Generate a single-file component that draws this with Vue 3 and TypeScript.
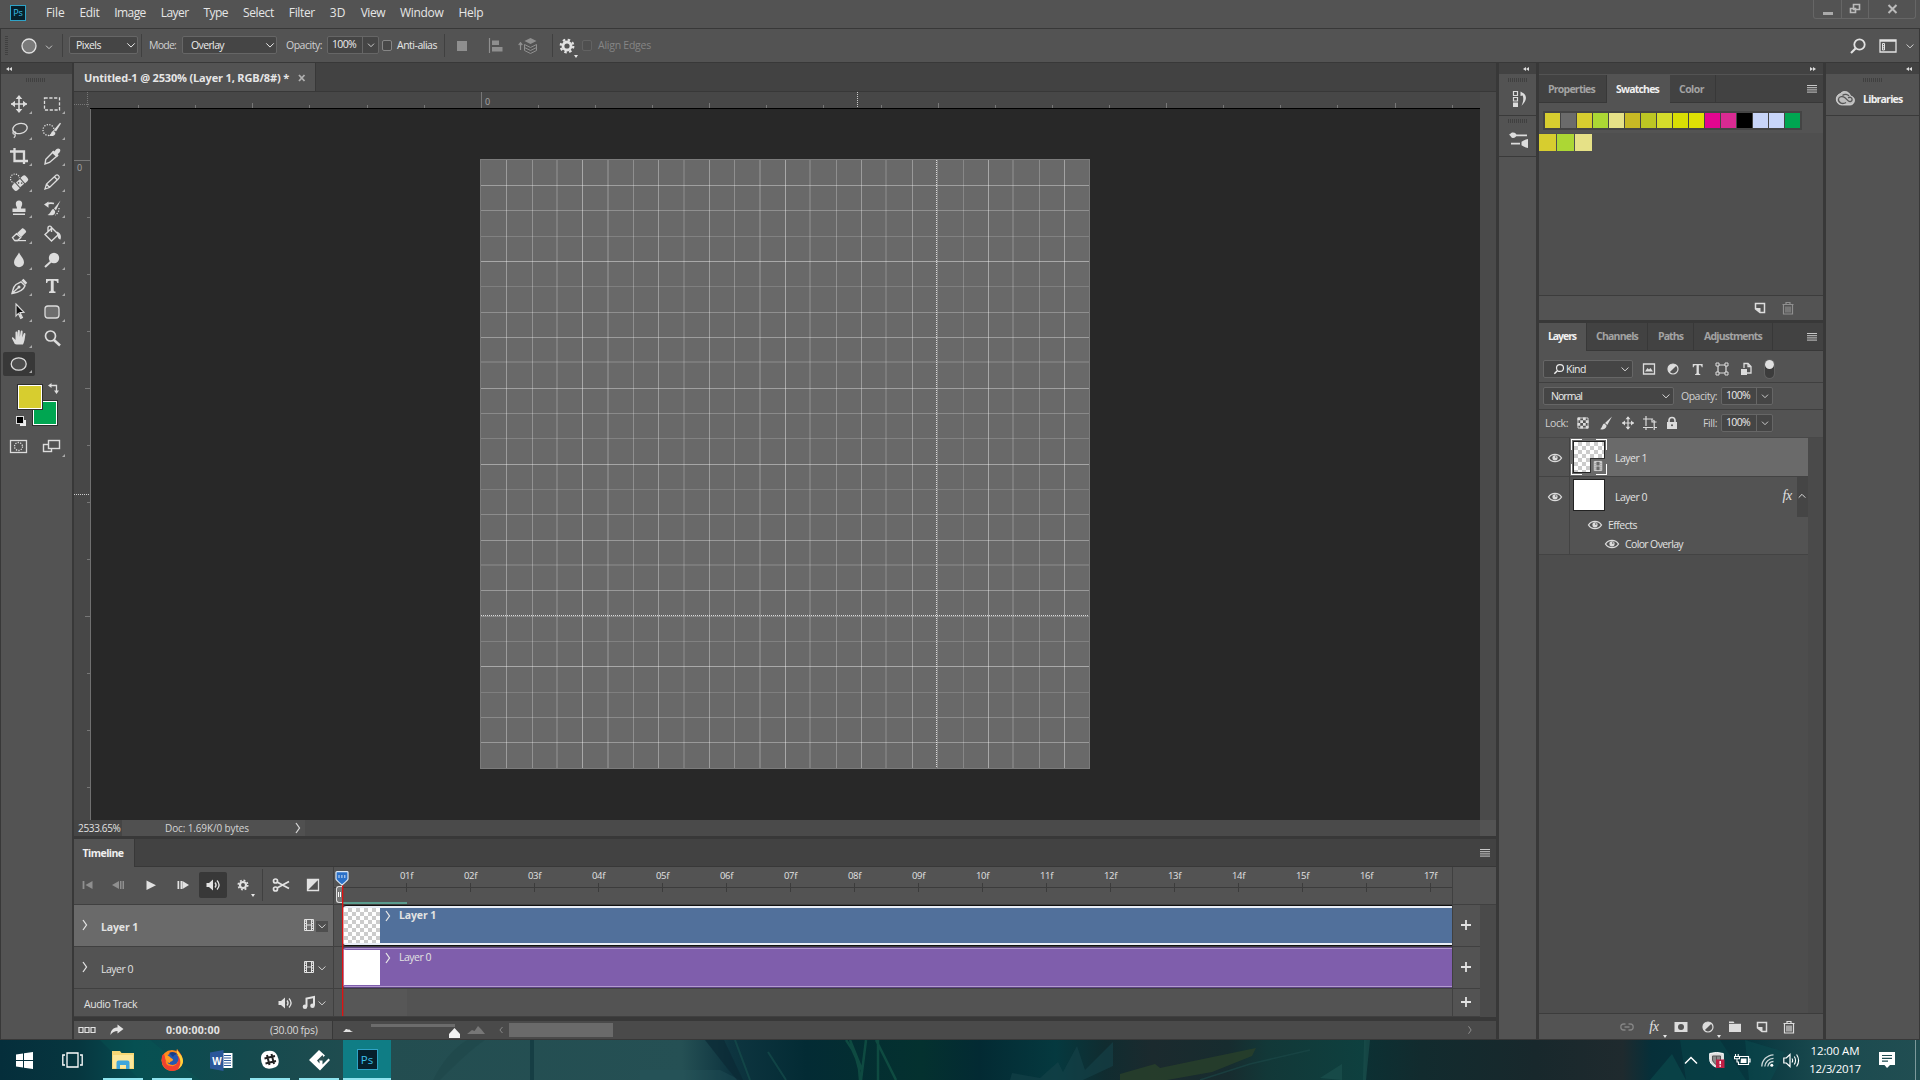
<script setup lang="ts">
import { h, type FunctionalComponent, type Directive } from 'vue'

/* Tightens or loosens tracking so a label occupies the given width in px. */
const vFit: Directive<HTMLElement, number> = {
  mounted(el, { value }) {
    const natural = el.getBoundingClientRect().width
    const n = (el.textContent ?? '').trim().length
    el.style.letterSpacing = `${(value - natural) / n}px`
    el.style.width = `${value}px`
  },
}

const S = 'fill="none" stroke="currentColor"'
const icons: Record<string, string> = {
  move: `<path d="M12 4v16M4 12h16" ${S} stroke-width="1.6"/><path d="M12 3l-3.3 4h6.6zM12 21l-3.3-4h6.6zM4 12l4-3.3v6.6zM20 12l-4-3.3v6.6z" fill="currentColor"/>`,
  marquee: `<rect x="4.5" y="6" width="15" height="12" ${S} stroke-width="1.3" stroke-dasharray="3.2 1.6"/>`,
  lasso: `<ellipse cx="13" cy="10.500" rx="7.300" ry="5" transform="rotate(-12 13 10.5)" ${S} stroke-width="1.4"/><path d="M7 13c-1.500 1-1.500 3.200.300 3.200s2-2 .200-2.600M8 16c.500 1.500 0 3-1.200 3.800" ${S} stroke-width="1.2"/>`,
  quick: `<circle cx="8.500" cy="12" r="5.500" ${S} stroke-width="1.3" stroke-dasharray="1.300 1.300"/><path d="M21 5.500l-1-.7-6 7 2 1.800zM13.500 13c-2.500-.2-2 3.500-4.700 4.700 3 1 6.800.3 6.600-3z" fill="currentColor"/>`,
  crop: `<path d="M3 7.500h14V20M7.500 4v13H21" ${S} stroke-width="2.300"/>`,
  eyedrop: `<path d="M13 8l4 4-7.500 6.500L5 20l.8-4.700z" ${S} stroke-width="1.400"/><path d="M11.500 8.500l2-2 1 1C16 5 18 3.500 19.700 5c1.500 1.500 0 3.700-2 5.200l1 1-2 2z" fill="currentColor"/>`,
  heal: `<circle cx="8" cy="8.500" r="4.500" ${S} stroke-width="1.2" stroke-dasharray="1.200 1.200"/><g transform="rotate(-42 13 13)"><rect x="4" y="9.500" width="18" height="7.200" rx="2.400" fill="currentColor"/><rect x="9.300" y="9" width="7.300" height="8.200" fill="#535353"/><rect x="10.300" y="10" width="5.300" height="6.200" fill="currentColor"/><circle cx="12" cy="12" r=".8" fill="#535353"/><circle cx="14.200" cy="14.200" r=".8" fill="#535353"/></g>`,
  pencil: `<path d="M5 19l1.500-5L16 5.200c1.500-1.200 4.200 1.300 2.900 3L9.500 17.500zM6.500 14l3 3.500M14.500 7l3 3" ${S} stroke-width="1.300"/>`,
  stamp: `<path d="M12 4.500a3.300 3.300 0 0 1 3.200 3.400c0 2-1.400 2.800-1.200 4.600h4.500v3.500h-13v-3.500H10c.2-1.800-1.200-2.600-1.200-4.600A3.300 3.300 0 0 1 12 4.500zM6 17.500h12V19H6z" fill="currentColor"/>`,
  history: `<path d="M20.500 4.500l-6.500 8 2 1.700zM13.500 13c-2.500-.2-2 4-6 6 4 .8 8 .3 7.600-3.800zM4 8.500l4.500-3v6.300z" fill="currentColor"/><path d="M7 8c2-1 5-1 7-.5" ${S} stroke-width="1.800"/><path d="M19 12a7 7 0 0 1-4 7" ${S} stroke-width="1.300" stroke-dasharray="1.300 1.300"/>`,
  eraser: `<path d="M5.500 15.500l4-3.800 4.300 3.800-3.300 3H7.600z" ${S} stroke-width="1.300"/><path d="M10 11.200l5-4.700c1-.9 4.800 2.400 4 3.700l-4.700 4.900z" fill="currentColor"/><path d="M8 18.600h11" ${S} stroke-width="1.200"/>`,
  bucket: `<path d="M5 12.500l7-6.500 6.500 6.500-7 6.500zM8 9.500V6c0-2.500 3.500-2.500 3.500 0v4" ${S} stroke-width="1.400"/><path d="M17 9.500c4 1.500 4.500 5 3.500 8-3-.5-2.800-4-3.500-5z" fill="currentColor"/>`,
  drop: `<path d="M12 4.500c1.500 3.500 5 6.300 5 9.700a5 5 0 0 1-10 0c0-3.400 3.500-6.200 5-9.700z" fill="currentColor"/>`,
  dodge: `<circle cx="14" cy="10" r="5.200" fill="currentColor"/><path d="M11 13.500L5 19" ${S} stroke-width="2"/>`,
  pen: `<path d="M5 19.500c1.200-3.500.8-6.500 4-9l5-2.700 4 4c-1.500 4.500-5 6.500-13 7.700zM5.500 19l6-5.500" ${S} stroke-width="1.400"/><circle cx="12" cy="13" r="1.500" fill="currentColor"/><path d="M14.500 6.500l2-1.700 3.700 3.900-1.700 2.100z" fill="currentColor"/>`,
  type: `<path d="M6 5h12.500v4h-1.200c-.3-1.500-.8-2.300-2.500-2.300h-1.100V16c0 1.200.6 1.500 1.800 1.600v1.300H9v-1.300c1.200-.1 1.800-.4 1.800-1.600V6.700H9.700C8 6.700 7.500 7.500 7.200 9H6z" fill="currentColor"/>`,
  arrow: `<path d="M9 4l8 8.300-4 .3 2.500 5-1.800.9-2.400-5L9 16z" fill="#111" stroke="currentColor" stroke-width="1.100"/><path d="M12.600 13.500l2 4.600" ${S} stroke-width="1.800"/>`,
  rrect: `<rect x="5" y="6" width="14" height="12" rx="3" fill="#6e6e6e" stroke="currentColor" stroke-width="1.300"/>`,
  hand: `<path d="M6.800 18L4 12.500c-.4-1.300 1-1.500 1.700-.6L7.500 14V6.500c0-1.300 1.800-1.300 1.900 0V11l.4-6c.1-1.400 2-1.400 2 0v6l.9-5.700c.2-1.300 2-1 1.900.3l-.3 6 1.300-3.800c.5-1.200 2-.7 1.800.5-.5 3-.8 8-2.500 10.200H8.700z" transform="translate(1 0)" fill="currentColor"/>`,
  zoom: `<circle cx="10.500" cy="10" r="5" ${S} stroke-width="1.700"/><path d="M14 14l6 5.500" ${S} stroke-width="2.500"/>`,
  ellipse: `<ellipse cx="11.700" cy="12" rx="7.500" ry="6.200" fill="#6e6e6e" fill-opacity=".4" stroke="currentColor" stroke-width="1.300"/>`,
  mask: `<rect x="3.500" y="5.500" width="16" height="12" ${S} stroke-width="1.300"/><circle cx="11.500" cy="11.500" r="4" ${S} stroke-width="1.300" stroke-dasharray="1.300 1.200"/>`,
  screen: `<rect x="3.500" y="9.500" width="8" height="7" ${S} stroke-width="1.400"/><rect x="8.500" y="5.500" width="11" height="8" fill="#535353" stroke="currentColor" stroke-width="1.400"/>`,
  chev: `<path d="M7.500 10l4.500 4.500 4.500-4.500" ${S} stroke-width="1.200"/>`,
  chevUp: `<path d="M8 14l4-4 4 4" ${S} stroke-width="1.200"/>`,
  chevR: `<path d="M10 7l3.500 5-3.500 5" ${S} stroke-width="1.300"/>`,
  chevL: `<path d="M14 8l-3.500 4 3.500 4" ${S} stroke-width="1.200"/>`,
  circ: `<circle cx="12" cy="12" r="7" fill="#7a7a7a" stroke="currentColor" stroke-width="1.300"/>`,
  square: `<rect x="7" y="7" width="10" height="10" fill="currentColor"/>`,
  align: `<path d="M5.500 4v15" ${S} stroke-width="1.200"/><path d="M8 6.500h7v4.500H8zM8 13h10.500v4.500H8z" fill="currentColor"/>`,
  stack: `<path d="M14.500 4l6 3-6 3-6-3z" fill="currentColor"/><path d="M8.500 10.500l6 3 6-3M8.500 13.500l6 3 6-3M8.500 16.500l6 3 6-3M8.500 10.500v6M20.500 10.500v6" ${S} stroke-width="1"/><path d="M4.500 16V9M2.700 11l1.800-2.200L6.300 11" ${S} stroke-width="1.200"/>`,
  gear: `<circle cx="12" cy="12" r="4" ${S} stroke-width="2.800"/><circle cx="12" cy="12" r="6.300" ${S} stroke-width="2.200" stroke-dasharray="2.470 2.470"/>`,
  search: `<circle cx="13.500" cy="10.500" r="5.200" ${S} stroke-width="1.800"/><path d="M9.500 14.500L5 19" ${S} stroke-width="2.200"/>`,
  workspace: `<path d="M4 6h16v12H4zM4 7h16" ${S} stroke-width="1.300"/><path d="M6.500 9.500h2v6.500h-2zM6.500 11.700h2M6.500 13.800h2" ${S} stroke-width="1"/>`,
  lines: `<path d="M7 8.500h10M7 10.700h10M7 12.900h10M7 15.100h10" ${S} stroke-width="1"/>`,
  histPanel: `<path d="M4.500 4.500h4v4h-4zM4.500 10.500h4v3.500h-4z" ${S} stroke-width="1.200"/><path d="M4 15.500h5v4.500H4zM11.500 9V4.500l2 1.300c4 1.500 5.500 7-1 13 2-4.500 2.200-8 1.200-10.200z" fill="currentColor"/>`,
  brushes: `<path d="M8 7.500h12v1.800H8zM4 15.700h9v1.800H4zM2 7.500C4 7 3.500 5.500 6 5.500s3.500 1.500 3.500 2.800S8 11 6 11 4 9 2 7.500zM21 12v9c-2.500-.5-4.500-1.500-6.500-2.700v-3.600C16.500 13.500 18.500 12.500 21 12z" fill="currentColor"/>`,
  cc: `<path d="M7.500 6.500c-6.500 2-5 11.500 1.500 11.500h8c5 0 6.500-8 .5-9C16 3.500 9.500 3.500 7.500 6.500z" fill="#bdbdbd" stroke="#ddd" stroke-width=".8"/><path d="M13 15.500C9 18 5 15 5.500 12S10 9 12 10.700l3.500 3.400c1.500 1.200 3.800.3 3.600-1.800-.2-2-2.500-2.600-4-1.400M9.500 8.500c2-2 5.500-1.300 6.500.5" ${S} stroke-width="1.300" style="color:#555"/>`,
  page: `<path d="M7.500 7.500h9v9H12L7.500 13z" ${S} stroke-width="1.500"/><path d="M7 12h5.500v5z" fill="currentColor"/>`,
  trash: `<path d="M7.500 9v9h9V9M6.500 8.500h11M10 8V6.500h4V8M10 10.500v6M12 10.500v6M14 10.500v6" ${S} stroke-width="1.200"/>`,
  image: `<path d="M6.500 7h11v10h-11z" ${S} stroke-width="1.300"/><path d="M8 14.500l2.500-3.500 1.500 1.500 1.500-1.500 2.500 3.500z" fill="currentColor"/>`,
  adjust: `<circle cx="12" cy="12" r="5" ${S} stroke-width="1.200"/><path d="M15.600 8.400A5 5 0 0 1 8.400 15.600z" transform="rotate(180 12 12)" fill="currentColor"/>`,
  shape: `<path d="M8 8h8v8H8z" ${S} stroke-width="1.200"/><path d="M6 6h3v3H6zM15 6h3v3h-3zM6 15h3v3H6zM15 15h3v3h-3z" fill="#535353" stroke="currentColor" stroke-width="1"/>`,
  smart: `<path d="M10 11V6.500h4l3 3V16h-4M14 6.500v3h3" ${S} stroke-width="1.300"/><path d="M7 12h6v6H7z" fill="currentColor"/>`,
  checker: `<path d="M6.500 6.500h11v11h-11z" ${S} stroke-width="1"/><path d="M6 6h3v3H6zM12 6h3v3h-3zM9 9h3v3H9zM15 9h3v3h-3zM6 12h3v3H6zM12 12h3v3h-3zM9 15h3v3H9zM15 15h3v3h-3z" fill="currentColor"/>`,
  brush: `<path d="M18 5.500l-7 6.500 2.300 2zM10.500 12.500c-2.500.5-1.500 3.500-4.500 5.800 3 .5 6.500-.3 6.500-3.800z" fill="currentColor"/>`,
  artboard: `<path d="M8 5v14M5 8h9.500l1.700 2v9M5 16.500h14M14 8v3h4.500" ${S} stroke-width="1.200" stroke-dasharray="10 1"/>`,
  lock: `<path d="M7 11h10v7H7z" fill="currentColor"/><path d="M9 11.500V9.500c0-4 6-4 6 0v2" ${S} stroke-width="1.600"/><circle cx="12" cy="14.300" r="1" fill="#535353"/>`,
  eye: `<path d="M5.500 12c3-4.800 10-4.800 13 0-3 4.800-10 4.800-13 0z" ${S} stroke-width="1.400"/><circle cx="12" cy="11.800" r="2.600" fill="currentColor"/><circle cx="12.800" cy="11" r=".8" fill="#535353"/>`,
  film: `<path d="M7.500 6.500h9v11h-9zM9.500 6v12M14.500 6v12M9.500 12h5" ${S} stroke-width="1"/><path d="M7.500 8h2M7.500 10.500h2M7.500 13h2M7.500 15.500h2M14.500 8h2M14.500 10.500h2M14.500 13h2M14.500 15.500h2" ${S} stroke-width="1.100"/>`,
  link: `<path d="M10.500 9h-1.700a3 3 0 0 0 0 6h1.700M13.500 9h1.700a3 3 0 0 1 0 6h-1.700M9.500 12h5" ${S} stroke-width="1.300"/>`,
  addMask: `<path d="M5.500 7h13v10h-13z" fill="currentColor"/><circle cx="12" cy="12" r="3" fill="#535353"/>`,
  folder: `<path d="M6 6.500h4.500l1 1.500H18v9H6z" fill="currentColor"/><path d="M6 8.500h12" stroke="#535353" stroke-width=".8"/>`,
  first: `<path d="M7.500 8v8" ${S} stroke-width="1.800"/><path d="M16.500 8v8L9.500 12z" fill="currentColor"/>`,
  prev: `<path d="M13 8v8l-7-4zM14 8h1.500v8H14zM16.500 8H18v8h-1.500z" fill="currentColor"/>`,
  play: `<path d="M7.500 7.500v9.500l9.500-4.800z" fill="currentColor"/>`,
  next: `<path d="M6.500 8h1.700v8H6.500zM9.500 8h1.700v8H9.500zM11.500 8v8l6.500-4z" fill="currentColor"/>`,
  sound: `<path d="M5.500 10H8l4-3.500v11L8 14H5.500z" fill="currentColor"/><path d="M14 9.500c1.300 1.500 1.300 3.500 0 5M16 7.500c2.500 2.700 2.500 6.300 0 9" ${S} stroke-width="1.300"/>`,
  scissors: `<circle cx="6.500" cy="8" r="2" ${S} stroke-width="1.700"/><circle cx="6.500" cy="16" r="2" ${S} stroke-width="1.700"/><path d="M8 9l12 6.500M8 15l12-6.500" ${S} stroke-width="1.800"/>`,
  trans: `<path d="M6.500 6.500h11v11h-11z" ${S} stroke-width="1.300"/><path d="M17.500 6.500v11h-11z" fill="currentColor" transform="rotate(180 12 12)"/>`,
  note: `<path d="M9.500 15.500V7.500L17 6v8.500" ${S} stroke-width="2"/><circle cx="8" cy="15.800" r="2.300" fill="currentColor"/><circle cx="15.500" cy="14.800" r="2.300" fill="currentColor"/>`,
  boxes: `<path d="M4 9.500h4v5H4zM10 9.500h4v5h-4zM16 9.500h4v5h-4z" ${S} stroke-width="1.200"/>`,
  share: `<path d="M5.500 17c0-5 3-7.500 7-7.500V6.500L18.500 11l-6 4.500V13c-3 0-5 1-7 4z" fill="currentColor"/>`,
  plus: `<path d="M12 7v10M7 12h10" ${S} stroke-width="1.800"/>`,
  mount: `<path d="M7 14c2-1 2-3 3.500-3 .8 0 1 .7 1.500.7S13 11 14 12c1 1 1.500 1.500 3 2z" fill="currentColor"/>`,
  mountBig: `<path d="M3 16l5-4 2.500 1L14 8l3 3 4 5z" fill="currentColor"/>`,
}

const Icon: FunctionalComponent<{ n: string; s?: number }> = (p) =>
  h('svg', {
    class: 'ic', viewBox: '0 0 24 24', width: p.s ?? 24, height: p.s ?? 24, innerHTML: icons[p.n],
  })
Icon.props = ['n', 's']

const menus: [string, number][] = [
  ['File', 18.5], ['Edit', 20], ['Image', 31.5], ['Layer', 28], ['Type', 24.5], ['Select', 31],
  ['Filter', 26], ['3D', 16], ['View', 24.5], ['Window', 43.5], ['Help', 25],
]
const tools = [
  'move', 'marquee', 'lasso', 'quick', 'crop', 'eyedrop', 'heal', 'pencil', 'stamp', 'history', 'eraser',
  'bucket', 'drop', 'dodge', 'pen', 'type', 'arrow', 'rrect', 'hand', 'zoom', 'ellipse',
]
const sw1 = [
  '#d7cd2f', '#6b6b6b', '#d7cd2f', '#acd734', '#e6e187', '#c8b924', '#bcc623', '#d4dc2b', '#d9df04',
  '#dfe004', '#e3058f', '#d92a92', '#000000', '#c8d5f9', '#c8d5f9', '#00a651',
]
const sw2 = ['#d7cd2f', '#acd734', '#e6e187']

/* Document grid: pixel pitch at the current zoom, opacity per line. */
const pitch = 25.337
const vLv = [.34, .28, .15, .42, .17, .26, .34, .13, .34, .26, .17, .42, .14, .26, .34, .13, .32, .2, .2, .42, .14, .24, .38]
const hLv = [.36, .26, .16, .42, .15, .26, .34, .12, .36, .22, .17, .4, .15, .24, .32, .12, .32, .2, .16, .42, .15, .22, .32]
const frames = Array.from({ length: 17 }, (_, i) => String(i + 1).padStart(2, '0') + 'f')
const hTicks = Array.from({ length: 25 }, (_, i) => i - 6).filter((k) => k < 18)
const vTicks = Array.from({ length: 12 }, (_, i) => i)
</script>

<template>
  <div class="app">
    <header class="menubar">
      <span class="pslogo">Ps</span>
      <nav class="menus"><span v-for="m in menus" :key="m[0]" v-fit="m[1]">{{ m[0] }}</span></nav>
      <div class="winbtns">
        <span class="wb b1"><i class="dash"></i></span>
        <span class="wb b2"><svg width="12" height="12" viewBox="0 0 12 12"><path d="M4.500 1.500h6v5h-6zM1.500 5.500h5v4h-5z" fill="#535353" stroke="#bbb" stroke-width="1.600" /></svg></span>
        <span class="wb b3"><svg width="11" height="10" viewBox="0 0 11 10"><path d="M1.500 1l8 8M9.500 1l-8 8" stroke="#bbb" stroke-width="2" /></svg></span>
      </div>
    </header>

    <div class="options">
      <i class="grip"></i>
      <Icon n="circ" class="oc" /><Icon n="chev" :s="16" class="och" />
      <i class="vs s1"></i>
      <span class="sel px"><span v-fit="25">Pixels</span><Icon n="chev" :s="20" /></span>
      <i class="vs s2"></i>
      <span v-fit="27" class="lb l1">Mode:</span>
      <span class="sel md"><span v-fit="33">Overlay</span><Icon n="chev" :s="20" /></span>
      <span v-fit="36" class="lb l2">Opacity:</span>
      <span class="num"><b><span v-fit="24">100%</span></b><Icon n="chev" :s="18" /></span>
      <i class="cb c1"></i>
      <span v-fit="40" class="lb l3">Anti-alias</span>
      <i class="vs s3"></i>
      <Icon n="square" class="dim i1" /><Icon n="align" class="dim i2" /><Icon n="stack" class="dim i3" />
      <i class="vs s4"></i>
      <span class="gearwrap"><Icon n="gear" /><i class="tri"></i></span>
      <i class="cb c2"></i>
      <span v-fit="53" class="lb off">Align Edges</span>
      <span class="oright"><Icon n="search" /><Icon n="workspace" /><Icon n="chev" :s="18" /></span>
    </div>

    <div class="main">
      <aside class="toolbar">
        <div class="cbar left"><i class="ar l"></i><i class="ar l"></i></div>
        <i class="hgrip"></i>
        <div class="toolgrid">
          <span v-for="t in tools" :key="t" class="tool" :class="{ on: t === 'ellipse' }">
            <Icon :n="t" /><i v-if="t !== 'zoom'" class="corner"></i>
          </span>
        </div>
        <div class="colors">
          <i class="bgc"></i><i class="fgc"></i>
          <svg class="swap" width="12" height="12" viewBox="0 0 12 12"><path d="M2 3.500h6.500V10" fill="none" stroke="#ddd" stroke-width="1.300" /><path d="M0 3.500L3.500 1v5zM8.500 12L6 8.500h5z" fill="#ddd" /></svg>
          <i class="d2"></i><i class="d1"></i>
        </div>
        <div class="toolgrid modes">
          <span class="tool"><Icon n="mask" /></span><span class="tool"><Icon n="screen" /><i class="corner"></i></span>
        </div>
      </aside>

      <section class="center">
        <div class="doctabs">
          <div class="doctab"><span v-fit="205">Untitled-1 @ 2530% (Layer 1, RGB/8#) *</span>
            <svg width="8" height="8" viewBox="0 0 8 8"><path d="M1 1l5.500 6M6.500 1L1 7" stroke="#b0b0b0" stroke-width="1.800" /></svg></div>
        </div>
        <div class="docbody">
          <svg class="work" width="1406" height="728" viewBox="74 92 1406 728" shape-rendering="crispEdges">
            <rect x="74" y="92" width="1406" height="728" fill="#282828" />
            <rect x="74" y="92" width="1406" height="16" fill="#474747" />
            <rect x="74" y="92" width="16" height="728" fill="#474747" />
            <rect x="90" y="108" width="1390" height="1" fill="#000" />
            <path d="M90.500 109V820" stroke="#707070" />
            <path d="M87.500 92v16M74 104.500h16" stroke="#777" stroke-dasharray="1 1" />
            <rect v-for="k in hTicks" :key="'h' + k" :x="Math.floor(481.300 + k * 57.110)" :y="k === 0 ? 92 : k % 4 === 0 ? 103 : 105" width="1" :height="k === 0 ? 16 : k % 4 === 0 ? 5 : 3" fill="#777" />
            <rect v-for="k in vTicks" :key="'v' + k" :y="Math.floor(160.300 + k * 57.050)" :x="k === 0 ? 74 : k % 4 === 0 ? 85 : 87" height="1" :width="k === 0 ? 16 : k % 4 === 0 ? 5 : 3" fill="#777" />
            <path d="M857.500 92v16M74 494.500h16" stroke="#ccc" stroke-dasharray="1 1" />
            <text x="485" y="105" class="rt">0</text>
            <text x="77" y="171" class="rt">0</text>
            <rect x="480" y="159" width="610" height="610" fill="#7b7b7b" />
            <rect x="481" y="160" width="608" height="608" fill="#696969" />
            <rect v-for="(o, i) in vLv" :key="'gv' + i" :x="Math.floor(481.600 + (i + 1) * pitch) - (o < .18 ? 1 : 0)" y="160" :width="o < .18 ? 2 : 1" height="608" fill="#fff" :fill-opacity="o" />
            <rect v-for="(o, i) in hLv" :key="'gh' + i" :y="Math.floor(160.200 + (i + 1) * pitch) - (o < .14 ? 1 : 0)" x="481" :height="o < .14 ? 2 : 1" width="608" fill="#fff" :fill-opacity="o" />
            <path d="M936.500 160v608" stroke="#fff" stroke-opacity=".75" stroke-dasharray="1 1" />
            <path d="M481 615.500h608" stroke="#fff" stroke-opacity=".75" stroke-dasharray="1 1" />
          </svg>
          <i class="vscroll"></i>
        </div>
        <div class="status">
          <span class="zoomv"><span v-fit="42.500">2533.65%</span></span>
          <span class="docinfo"><span v-fit="84">Doc: 1.69K/0 bytes</span><Icon n="chevR" :s="24" /></span>
          <i class="hs"></i><i class="cornerbox"></i>
        </div>

        <div class="tltabs"><span class="tab on"><span v-fit="41">Timeline</span></span><Icon n="lines" /></div>
        <div class="tl">
          <div class="tlleft">
            <div class="ctrls">
              <Icon n="first" class="dim p1" /><Icon n="prev" class="dim p2" /><Icon n="play" class="p3" /><Icon n="next" class="p4" />
              <span class="mute"><Icon n="sound" /></span>
              <span class="g2"><Icon n="gear" :s="18" /><i class="tri"></i></span>
              <i class="csep"></i><Icon n="scissors" class="p5" /><Icon n="trans" class="p6" />
            </div>
            <div class="trk hi"><Icon n="chevR" :s="24" /><b v-fit="37">Layer 1</b><Icon n="film" class="flm" /><span class="cbx"><Icon n="chev" :s="18" /></span></div>
            <div class="trk"><Icon n="chevR" :s="24" /><span v-fit="32">Layer 0</span><Icon n="film" class="flm" /><span class="cbx n"><Icon n="chev" :s="18" /></span></div>
            <div class="trk aud"><span v-fit="53">Audio Track</span><Icon n="sound" class="spk" /><Icon n="note" /><span class="cbx n"><Icon n="chev" :s="18" /></span></div>
          </div>
          <div class="tlmid">
            <div class="fr">
              <div class="labels"><span v-for="f in frames" :key="f"><em v-fit="13">{{ f }}</em></span></div>
              <div class="ticks"><i v-for="f in frames" :key="f"></i></div>
              <i class="cache"></i>
            </div>
            <div class="lane"><div class="clip blue"><i class="th chk"></i><Icon n="chevR" :s="24" /><b v-fit="37">Layer 1</b></div></div>
            <div class="lane"><div class="clip purple"><i class="th"></i><Icon n="chevR" :s="24" /><span v-fit="32">Layer 0</span></div></div>
            <div class="lane audl"><i></i></div>
            <i class="inpt"></i>
            <i class="red"></i>
            <svg class="ph" width="14" height="15" viewBox="0 0 14 15"><path d="M1 1.500Q1 .7 2 .7h10q1 0 1 .8V8q0 1-6 6-6-5-6-6z" fill="#2a70c8" stroke="#dce8f5" stroke-width="1.200" /><path d="M4 4v3M6.900 4v3M9.800 4v3" stroke="#cfe0f5" stroke-width="1" /></svg>
          </div>
          <div class="tlplus"><span class="h0"></span><span class="h1"><Icon n="plus" /></span><span class="h1"><Icon n="plus" /></span><span class="h2"><Icon n="plus" /></span></div>
          <div class="tlsc"><i></i></div>
        </div>
        <div class="tlfoot">
          <div class="fl"><Icon n="boxes" /><Icon n="share" class="shr" /><b v-fit="54">0:00:00:00</b><span v-fit="47.500" class="fps">(30.00 fps)</span></div>
          <div class="fm"><Icon n="mount" class="m1" /><span class="slider"><i></i></span><Icon n="mountBig" class="m2" /><Icon n="chevL" :s="18" class="dim" /><i class="thumb"></i><Icon n="chevR" :s="18" class="dim end" /></div>
        </div>
      </section>

      <aside class="strip">
        <div class="cbar right"><i class="ar l"></i><i class="ar l"></i></div>
        <div class="sbox hp"><i class="hgrip sm"></i><Icon n="histPanel" /></div>
        <div class="sbox"><i class="hgrip sm"></i><Icon n="brushes" /></div>
      </aside>

      <aside class="panels">
        <div class="cbar right"><i class="ar r"></i><i class="ar r"></i></div>
        <div class="tabs">
          <span class="tab a"><span v-fit="47">Properties</span></span><span class="tab on b"><span v-fit="43">Swatches</span></span><span class="tab c"><span v-fit="25">Color</span></span>
          <Icon n="lines" class="mi" />
        </div>
        <div class="swatches">
          <div class="band"><div class="row1"><i v-for="(c, i) in sw1" :key="i" :style="{ background: c }"></i></div></div>
          <div class="row2"><i v-for="(c, i) in sw2" :key="i" :style="{ background: c }"></i></div>
        </div>
        <div class="swfoot"><Icon n="page" /><Icon n="trash" class="dim" /></div>
        <div class="tabs lt">
          <span class="tab on d"><span v-fit="28">Layers</span></span><span class="tab e"><span v-fit="42">Channels</span></span><span class="tab f"><span v-fit="25">Paths</span></span><span class="tab g"><span v-fit="58">Adjustments</span></span>
          <Icon n="lines" class="mi" />
        </div>
        <div class="lrow filter">
          <span class="sel kind"><Icon n="search" :s="16" /><span v-fit="20">Kind</span><Icon n="chev" :s="18" class="pushr" /></span>
          <Icon n="image" /><Icon n="adjust" /><Icon n="type" :s="19" /><Icon n="shape" /><Icon n="smart" /><span class="tog"><i></i></span>
        </div>
        <div class="lrow blend">
          <span class="sel norm"><span v-fit="31">Normal</span><Icon n="chev" :s="18" class="pushr" /></span>
          <span v-fit="36" class="lb op">Opacity:</span><span class="num"><b><span v-fit="24">100%</span></b><Icon n="chev" :s="18" /></span>
        </div>
        <div class="lrow locks">
          <span v-fit="23" class="lb">Lock:</span>
          <span class="lks"><Icon n="checker" :s="22" /><Icon n="brush" /><Icon n="move" :s="18" /><Icon n="artboard" /><Icon n="lock" /></span>
          <span v-fit="14" class="lb fi">Fill:</span><span class="num"><b><span v-fit="24">100%</span></b><Icon n="chev" :s="18" /></span>
        </div>
        <div class="list">
          <div class="items">
            <div class="layer hi">
              <span class="eyec"><Icon n="eye" /></span>
              <span class="body"><span class="brk"><i class="thb chk"></i><i class="badge"><Icon n="film" :s="20" /></i></span><span v-fit="32" class="ln">Layer 1</span></span>
            </div>
            <div class="layer two">
              <span class="eyec"><Icon n="eye" /></span>
              <span class="body">
                <span class="r0"><i class="thb"></i><span v-fit="32">Layer 0</span><em class="fx">fx</em><i class="exp"><Icon n="chevUp" :s="20" /></i></span>
                <span class="r1"><Icon n="eye" /><span v-fit="29">Effects</span></span>
                <span class="r2"><Icon n="eye" /><span v-fit="58">Color Overlay</span></span>
              </span>
            </div>
          </div>
          <i class="lsc"></i>
        </div>
        <div class="lfoot">
          <Icon n="link" class="dim" /><span class="fxb"><em class="fx">fx</em><i class="tri"></i></span><Icon n="addMask" /><span class="fxb"><Icon n="adjust" /><i class="tri"></i></span><Icon n="folder" /><Icon n="page" /><Icon n="trash" />
        </div>
      </aside>

      <aside class="libs">
        <div class="cbar right"><i class="ar l"></i><i class="ar l"></i></div>
        <div class="lib"><i class="hgrip sm"></i><div class="lrow2"><Icon n="cc" /><b v-fit="39.500">Libraries</b></div></div>
      </aside>
    </div>

    <footer class="taskbar">
      <svg class="wall" width="1920" height="40" viewBox="0 0 1920 40" preserveAspectRatio="none">
        <defs><linearGradient id="wg" x1="0" x2="1">
          <stop offset="0" stop-color="#052e3b" /><stop offset=".04" stop-color="#06363f" /><stop offset=".07" stop-color="#064b50" /><stop offset=".13" stop-color="#154a4e" />
          <stop offset=".2" stop-color="#234d50" /><stop offset=".355" stop-color="#255054" /><stop offset=".38" stop-color="#0e3540" /><stop offset=".42" stop-color="#032b34" />
          <stop offset=".48" stop-color="#04312f" /><stop offset=".51" stop-color="#032a33" /><stop offset=".55" stop-color="#05393f" /><stop offset=".575" stop-color="#102c30" />
          <stop offset=".6" stop-color="#1b2a2e" /><stop offset=".64" stop-color="#172c2f" /><stop offset=".66" stop-color="#123838" /><stop offset=".71" stop-color="#0e403f" />
          <stop offset=".712" stop-color="#0c3033" /><stop offset=".74" stop-color="#122b2e" /><stop offset=".8" stop-color="#18282c" /><stop offset=".845" stop-color="#1f2a2e" /><stop offset=".86" stop-color="#062f39" /><stop offset=".91" stop-color="#06363e" />
          <stop offset=".95" stop-color="#1b4a4f" /><stop offset="1" stop-color="#214e52" />
        </linearGradient></defs>
        <rect width="1920" height="40" fill="url(#wg)" />
        <path d="M100 0l40 40h60L150 0z" fill="#086058" opacity=".25" />
        <path d="M440 40q30-30 45-40h-18q-20 12-34 40z" fill="#1b4346" opacity=".4" /><path d="M530 0h4v40h-4z" fill="#163e44" />
        <path d="M640 30h80l20 10H640z" fill="#285a60" opacity=".3" /><path d="M705 0l22 28 10 12h6L724 0z" fill="#0b2a35" opacity=".7" />
        <path d="M735 0l15 40M768 12l18 28" stroke="#17524f" stroke-width="2" fill="none" opacity=".6" />
        <path d="M846 0q14 18 14 40M866 0l-5 40M878 0v40M850 0l12 30M876 0l20 40" stroke="#17624f" stroke-width="2.500" fill="none" opacity=".55" />
        <path d="M1010 40l2-7 28 5 18-16 5 10 14-26 8 24 28-28v24l-30 14z" fill="#164349" opacity=".6" />
        <path d="M1120 34l35-10 5 4 96-20-4 8-40 16-45 8h-47z" fill="#28402a" opacity=".85" />
        <path d="M1200 40l50-16 60-14" stroke="#1c4a4a" stroke-width="1.500" fill="none" opacity=".6" />
        <path d="M1320 38l22-14v16zM1364 0h6l-4 40h-3z" fill="#1d5350" opacity=".6" />
        <path d="M1680 0h40l26 40h-60z" fill="#08474b" opacity=".5" /><path d="M1745 0l40 12-14 28h-22z" fill="#0c4c50" opacity=".5" /><path d="M1650 40l22-26 14 26z" fill="#0c5152" opacity=".5" />
      </svg>
      <span class="tk w1"><svg width="17" height="17" viewBox="0 0 17 17"><path d="M0 2.500l7-1V8H0zM8 1.300L17 0v8H8zM0 9h7v6.500l-7-1zM8 9h9v8l-9-1.300z" fill="#fff" /></svg></span>
      <span class="tk w2"><svg width="21" height="16" viewBox="0 0 21 16"><path d="M5 1h11v14H5z M3 3H.8v10H3M18 3h2.200v10H18" fill="none" stroke="#fff" stroke-width="1.300" /></svg></span>
      <span class="tk run"><svg width="22" height="20" viewBox="0 0 22 20"><path d="M0 1h8l1.500 2H22v16H0z" fill="#f8d775" /><path d="M1 5h20v13H1z" fill="#fde79b" /><path d="M4.500 19v-6.500q0-2 2-2h9q2 0 2 2V19h-3.500v-4H8v4z" fill="#3fa6dc" /></svg></span>
      <span class="tk run"><svg width="24" height="24" viewBox="0 0 24 24"><circle cx="12" cy="12.500" r="10.500" fill="#ff8a1d" /><path d="M2 8C0 17 6 23 12 23s10.500-4 11-10C22 5 18 3 17 1c-1 3 0 5 1 9 1 5-3 9-7 8-4 0-6-3-5-6L4 6C3 6 2.500 7 2 8z" fill="#f0412f" /><path d="M17 1c1 4 6 6 6 12 0 4-3 7-5 8 3-4 3-8 1-12-2-3-3-5-2-8z" fill="#ffd43a" /><circle cx="12.500" cy="11" r="6" fill="#2458b0" /><path d="M5 8c3-1 4 0 6 2 2 1 3 2 1 3-1 1-2 0-2 2-3 0-5-3-5-7z" fill="#ff9b24" /><path d="M9 5c3-2 7-1 9 2-3-1-4 0-5 2z" fill="#1a3d86" /></svg></span>
      <span class="tk"><svg width="23" height="21" viewBox="0 0 23 21"><path d="M12 3h10.500v15H12z" fill="#fff" /><path d="M14 5.500h7M14 8h7M14 10.500h7M14 13h7M14 15.500h7" stroke="#2b579a" stroke-width="1.200" /><path d="M0 2.500L13.500 0v21L0 18.500z" fill="#2b579a" /><text x="2.200" y="14.500" class="wd">W</text></svg></span>
      <span class="tk run"><svg width="20" height="20" viewBox="0 0 20 20"><path d="M5 1.500Q14-1 17 5q4 9-1 12-9 4-13-1Q-2 5 5 1.500z" fill="#fff" /><path d="M7 5l2.500 10M11.500 4L14 14M4.500 8.500L15 6M5.500 13.500L16 11" stroke="#222" stroke-width="2" /></svg></span>
      <span class="tk run"><svg width="21" height="21" viewBox="0 0 21 21"><path d="M10 0l6 5.500-5.500 5 3 0v4l6-6 1.500 1.500L11 20.500 0 10z" fill="#fff" /><path d="M13.500 5L8 10.500l2.500 3V10H16z" fill="#2c4d50" /></svg></span>
      <span class="tk run psb"><span class="pslogo big">Ps</span></span>
      <div class="tray">
        <svg width="14" height="9" viewBox="0 0 14 9"><path d="M1 7.500l6-6 6 6" fill="none" stroke="#fff" stroke-width="1.500" /></svg>
        <svg class="t2" width="16" height="17" viewBox="0 0 16 17"><path d="M.7 1.500q7-2 13.600 0v6q0 5-6.500 8Q.7 12.500.7 7.500z" fill="#ddd" stroke="#fff" /><path d="M3.500 4h8v4q0 2-4 5-4-3-4-5zM7.500 4v8" fill="#888" stroke="#555" /><path d="M7 7.500h8.500V16H7z" fill="#c01f45" /><path d="M11.200 9v3.300M11.200 13.300v1.400" stroke="#fff" stroke-width="1.500" /></svg>
        <svg class="t3" width="17" height="12" viewBox="0 0 17 12"><path d="M6 2.500h8.500v8H4.500V8M14.500 5h1.500v3h-1.500" fill="none" stroke="#fff" stroke-width="1.200" /><path d="M7 4.500h5.500v4.500H6.500z" fill="#fff" /><path d="M1.500 0v2M4.200 0v2M.5 2.500h5v2.300H.5zM3 5v3h2" fill="none" stroke="#fff" stroke-width="1.100" /></svg>
        <svg class="t4" width="13" height="13" viewBox="0 0 13 13"><path d="M.8 12.500A12 12 0 0 1 12.500.8M3.800 12.500a9 9 0 0 1 8.700-8.200M6.800 12.500A6 6 0 0 1 12.500 7.500" fill="none" stroke="#ccd8d9" stroke-width="1.300" /><circle cx="10.800" cy="11.300" r="1.500" fill="#fff" /></svg>
        <svg class="t5" width="17" height="15" viewBox="0 0 17 15"><path d="M.8 5h2.500L7 1.500v12L3.300 10H.8z" fill="none" stroke="#fff" stroke-width="1.200" /><path d="M9 5.500q1.300 2 0 4M11.300 3.500q2.500 4 0 8M13.600 1.500q4 6 0 12" fill="none" stroke="#fff" stroke-width="1.100" /></svg>
        <div class="clock"><span v-fit="49">12:00 AM</span><span v-fit="51.500">12/3/2017</span></div>
        <svg class="t6" width="16" height="16" viewBox="0 0 16 16"><path d="M0 0h16v13h-5l-3 3-2.500-3H0z" fill="#fff" /><path d="M3 3.500h10M3 6.300h10M3 9.100h6" stroke="#1f4d52" stroke-width="1.200" /></svg>
        <i class="desk"></i>
      </div>
    </footer>
  </div>
</template>

<style>
body { margin: 0; background: #535353; overflow: hidden; }
.ic { display: block; flex: none; }
</style>

<style scoped>
.app { width: 1920px; height: 1080px; display: flex; flex-direction: column; background: #383838; color: #e2e2e2; font: 10.500px/14px "Open Sans", "Noto Sans", sans-serif; overflow: hidden; }
.app :is(span, b, em) { white-space: nowrap; flex: none; }
i { display: block; flex: none; font-style: normal; }
.dim { color: #8f8f8f; }
.tri { width: 0; height: 0; border: 2.500px solid transparent; border-top: 3px solid #e6e6e6; border-bottom: 0; }

.menubar { height: 28px; display: flex; align-items: flex-start; background: #535353; margin-bottom: 1px; }
.pslogo { box-sizing: border-box; width: 16px; height: 16px; margin: 5px 0 0 10px; border: 1px solid #2fa3c7; background: #06202c; color: #3cc0ea; font-size: 9px; line-height: 14px; text-align: center; }
.menus { display: flex; gap: 14.900px; margin: 4px 0 0 20px; font-size: 12px; line-height: 18px; color: #e6e6e6; }
.winbtns { display: flex; margin-left: auto; margin-right: 4px; border: 1px solid #666; border-top: 0; height: 18px; border-radius: 0 0 3px 3px; }
.wb { display: flex; justify-content: center; align-items: center; border-right: 1px solid #666; }
.wb:last-child { border: 0; }
.b1 { width: 27px; } .b2 { width: 26px; } .b3 { width: 46px; }
.dash { width: 10px; height: 3px; background: #aaa; margin-top: 8px; }

.options { height: 33px; display: flex; align-items: center; background: #535353; margin: 0 1px 1px; }
.grip { width: 3px; height: 19px; margin-left: 4px; background: repeating-linear-gradient(#404040 0 1px, transparent 1px 2px); }
.oc { margin-left: 9px; } .och { margin: 2px 0 0 0; }
.vs { width: 1px; height: 23px; background: #404040; }
.s1 { margin-left: 5px; } .s2 { margin-left: 3px; } .s3 { margin-left: 7px; } .s4 { margin-left: 12px; }
.sel, .num { box-sizing: border-box; height: 18px; display: flex; align-items: center; justify-content: space-between; background: #454545; border: 1px solid #666; border-radius: 2px; color: #ececec; }
.options .sel, .options .num, .options .lb { position: relative; top: -.5px; }
.options .sel .ic { margin-right: -4px; }
.px { width: 69px; margin-left: 6px; padding-left: 6px; }
.md { width: 95px; margin-left: 6px; padding-left: 8px; }
.lb { color: #d0d0d0; }
.l1 { margin-left: 7px; } .l2 { margin-left: 9px; } .l3 { margin-left: 5px; color: #e6e6e6; }
.num { width: 52px; margin-left: 5px; padding: 0; }
.num b { font-weight: 400; width: 35px; height: 16px; box-sizing: border-box; border-right: 1px solid #666; padding-left: 4px; }
.num .ic { margin-right: -1px; width: 16px; }
.cb { box-sizing: border-box; width: 10px; height: 11px; border: 1px solid #868686; border-radius: 2px; background: #484848; }
.c1 { margin-left: 3px; } .c2 { margin-left: 5px; opacity: .3; }
.i1 { margin-left: 5px; } .i2 { margin-left: 10px; } .i3 { margin-left: 8px; }
.gearwrap, .g2 { display: flex; position: relative; }
.gearwrap { margin-left: 2px; width: 22px; } .gearwrap .tri { position: absolute; left: 19px; top: 21px; }
.off { color: #858585; margin-left: 6px; }
.oright { margin-left: auto; display: flex; align-items: center; gap: 6px; }
.oright .ic:last-child { margin-left: -5px; }

.main { flex: none; height: 976px; display: flex; }
.cbar { height: 11px; background: #424242; display: flex; align-items: center; margin-bottom: 1px; flex: none; }
.cbar.left { padding-left: 5px; } .cbar.right { justify-content: flex-end; padding-right: 7px; }
.ar { width: 0; height: 0; border: 2.500px solid transparent; }
.ar.l { border-right: 3.500px solid #ddd; border-left: 0; } .ar.r { border-left: 3.500px solid #ddd; border-right: 0; }
.hgrip { width: 19px; height: 4px; background: repeating-linear-gradient(90deg, #404040 0 1px, transparent 1px 2px); }

.toolbar { width: 71px; margin-right: 2px; margin-left: 1px; display: flex; flex-direction: column; background: #535353; color: #dcdcdc; }
.toolbar .hgrip { margin: 3px 0 9px 25px; }
.toolgrid { display: grid; grid-template-columns: 33px 33px; padding-left: 2px; }
.modes { margin-top: -1px; }
.tool { height: 26px; width: 32px; display: flex; align-items: center; justify-content: center; position: relative; }
.tool.on { height: 24px; margin-top: 1px; background: #383838; border-radius: 2px; }
.corner { position: absolute; right: 3px; bottom: 3px; width: 0; height: 0; border-left: 3px solid transparent; border-bottom: 3px solid #aaa; }
.colors { position: relative; height: 53px; margin-top: 6px; }
.colors i { position: absolute; box-sizing: border-box; border: 1px solid #2e2e2e; }
.fgc { left: 16px; top: 2px; width: 26px; height: 26px; background: #d7cd2f; box-shadow: inset 0 0 0 1px #fff; }
.bgc { left: 31px; top: 18px; width: 26px; height: 26px; background: #00a651; box-shadow: inset 0 0 0 1px #fff; }
.swap { position: absolute; left: 47px; top: 0; }
.colors .d1 { left: 15px; top: 34px; width: 8px; height: 8px; background: #000; border-color: #ddd; }
.colors .d2 { left: 19px; top: 38px; width: 6px; height: 6px; background: #eee; border-color: #eee; }

.center { width: 1422px; margin-right: 3px; display: flex; flex-direction: column; background: #383838; flex: none; }
.doctabs { height: 28px; background: #424242; margin-bottom: 1px; display: flex; }
.doctab { width: 242px; box-sizing: border-box; background: #535353; border-right: 1px solid #383838; display: flex; align-items: center; padding: 1px 0 0 10px; font-weight: 700; font-size: 11px; gap: 9px; color: #e6e6e6; }
.docbody { height: 728px; display: flex; }
.work { display: block; }
.rt { fill: #a8a8a8; font: 9px "Open Sans", sans-serif; }
.vscroll { width: 16px; background: #4a4a4a; }
.status { height: 16px; display: flex; margin-bottom: 3px; background: #4a4a4a; line-height: 16px; font-size: 10px; }
.zoomv { width: 48px; background: #454545; padding-left: 4px; box-sizing: border-box; }
.docinfo { width: 183px; background: #505050; display: flex; align-items: center; padding-left: 43px; box-sizing: border-box; color: #d4d4d4; }
.docinfo .ic { margin-left: 37px; }
.hs { width: 1175px; } .cornerbox { width: 16px; background: #535353; }

.tab { display: flex; align-items: center; height: 27px; box-sizing: border-box; color: #a3a3a3; font-weight: 700; border-right: 1px solid #383838; }
.tab.on { background: #535353; color: #f0f0f0; height: 28px; padding-bottom: 1px; }
.tltabs { height: 27px; background: #424242; display: flex; margin-bottom: 1px; justify-content: space-between; }
.tltabs .tab { width: 61px; padding-left: 8.500px; } .tltabs .ic { color: #c8c8c8; margin: 2px -1px 0 0; }
.tl { display: flex; height: 150px; background: #404040; }
.tlleft { width: 259px; margin-right: 1px; display: flex; flex-direction: column; gap: 1px; }
.ctrls { height: 37px; background: #535353; display: flex; align-items: center; }
.ctrls > * { margin-top: -1px; }
.p1 { margin-left: 2px; } .p2 { margin-left: 6px; } .p3 { margin-left: 9px; } .p4 { margin-left: 8px; }
.mute { width: 28px; height: 26px; background: #383838; border-radius: 2px; display: flex; justify-content: center; align-items: center; margin-left: 4px; }
.g2 { margin-left: 7px; width: 28px; } .g2 .tri { position: absolute; left: 17px; top: 18px; }
.csep { width: 1px; height: 32px; background: #404040; } .p5 { margin-left: 6px; } .p6 { margin-left: 8px; }
.trk { height: 41px; background: #535353; display: flex; align-items: center; box-sizing: border-box; padding-top: 2px; }
.trk.hi { background: #6a6a6a; }
.trk > .ic:first-child { margin: -3px 4px 0 -1px; }
.trk .flm { margin: -3px 0 0 auto; }
.cbx { width: 12px; height: 11px; display: flex; align-items: center; justify-content: center; margin: -1px 6px 0 -6px; background: #4e4e4e; }
.trk .cbx { margin-right: 5px; margin-left: -5px; }
.cbx.n { background: none; }
.aud { height: 27px; padding-left: 10px; } .aud .spk { margin: -2px 0 0 auto; } .aud .ic + .ic { margin-top: -2px; }
.tlmid { width: 1118px; margin-right: 1px; position: relative; display: flex; flex-direction: column; gap: 1px; }
.fr { height: 37px; background: #535353; position: relative; }
.labels { display: flex; height: 20px; padding-left: 40.500px; border-bottom: 1px solid #3c3c3c; }
.labels span { width: 64px; display: flex; justify-content: center; font-size: 9.500px; line-height: 17px; } .labels em { font-style: normal; }
.ticks { display: flex; margin: -5px 0 0 72px; gap: 63px; } .ticks i { width: 1px; height: 9px; background: #3c3c3c; }
.cache { position: absolute; left: 9px; top: 35px; height: 2px; width: 64px; background: #5b9c8e; }
.lane { height: 41px; background: #535353; padding-left: 9px; }
.clip { height: 41px; box-sizing: border-box; display: flex; border-radius: 3px 0 0 3px; padding: 2px 0 0 1px; }
.blue { background: #51709b; border: solid #111; border-width: 1px 0; box-shadow: inset 1px 2px #e9eef6, inset 0 -2px #e9eef6; }
.purple { background: #7f5eac; border: solid #5c4480; border-width: 1px 0; box-shadow: inset 1px 1px #b39ad0, inset 0 -1px #b39ad0; }
.clip .ic { margin: -4px 0 0 -4px; color: #e6e6e6; } .clip .ic + * { margin: 0 0 0 -1px; }
.th { width: 36px; height: 35px; background: #fff; }
.chk { background: repeating-conic-gradient(#ccc 0 25%, #fff 0 50%) 0 0 / 8px 8px; }
.audl { height: 27px; padding: 0; } .audl i { width: 73px; height: 27px; background: linear-gradient(90deg, #535353 9px, #575757 9px); }
.red { position: absolute; left: 8px; top: 18px; width: 1px; height: 131px; background: #e01212; box-shadow: 1px 0 rgba(200, 20, 20, .35); }
.inpt { position: absolute; left: 2px; top: 19px; width: 5px; height: 15px; border: 1px solid #ddd; border-right: 0; border-radius: 3px 0 0 3px; background: linear-gradient(90deg, transparent 1px, #fff 1px 2px, transparent 2px 3px, #fff 3px 4px, transparent 4px) 0 5px / 5px 5px no-repeat #777; }
.ph { position: absolute; left: 1px; top: 4px; }
.tlplus { width: 27px; display: flex; flex-direction: column; gap: 1px; }
.tlplus span { background: #535353; display: flex; align-items: center; justify-content: center; }
.tlplus .ic { margin: -1px 0 0 -2px; }
.h0 { height: 37px; margin-right: -16px; } .h1 { height: 41px; } .h2 { height: 27px; }
.tlsc { width: 16px; display: flex; } .tlsc i { width: 16px; background: #4a4a4a; margin-top: 38px; }
.tlfoot { height: 18px; margin-top: 4px; display: flex; background: #4a4a4a; }
.fl { width: 258px; margin-right: 1px; background: #535353; display: flex; align-items: center; box-shadow: 1px 0 #383838; }
.fl > .ic { margin: 0 0 0 1px; } .fl .shr { margin: -1px 0 0 6px; } .fl b { margin-left: 37px; } .fps { margin-left: 50px; color: #d8d8d8; }
.fm { flex: 1; display: flex; align-items: center; }
.m1 { margin-left: 3px; } .slider { width: 84px; height: 18px; margin-left: 11px; position: relative; }
.slider::before { content: ""; display: block; height: 3px; margin-top: 3px; background: #6c6c6c; }
.slider i { position: absolute; right: -5px; top: 7px; width: 11px; height: 10px; background: #f2f2f2; clip-path: polygon(50% 0, 100% 60%, 100% 100%, 0 100%, 0 60%); }
.m2 { margin-left: 9px; color: #777; width: 24px; } .fm .dim { margin-left: 4px; }
.thumb { width: 104px; height: 14px; background: #6a6a6a; margin-left: -1px; } .fm .end { margin-left: auto; margin-right: 17px; }

.strip { width: 37px; margin-right: 3px; background: #535353; display: flex; flex-direction: column; flex: none; }
.sbox { height: 40px; border-bottom: 1px solid #3a3a3a; display: flex; flex-direction: column; align-items: center; }
.sbox .ic { margin-top: 4px; margin-left: 3px; color: #dcdcdc; } .hp .ic { margin: 5px 0 0 6px; } .hgrip.sm { margin-top: 3px; }

.panels { width: 284px; margin-right: 3px; display: flex; flex-direction: column; flex: none; background: #535353; }
.tabs { height: 27px; background: #424242; display: flex; border-bottom: 1px solid #383838; flex: none; }
.tabs .mi { margin: 2px -1px 0 auto; color: #c8c8c8; }
.a { width: 68px; padding-left: 9px; } .b { width: 63px; padding-left: 9px; border: 0; } .c { width: 46px; padding-left: 9px; }
.d { width: 48px; padding-left: 9px; } .e { width: 61px; padding-left: 9px; } .f { width: 46px; padding-left: 10px; } .g { width: 79px; padding-left: 10px; }
.swatches { height: 192px; background: #4f4f4f; }
.band { height: 30px; background: #535353; padding-top: 8px; box-sizing: border-box; }
.row1 { margin-left: 4px; width: 259px; height: 19px; background: #444; display: flex; gap: 1px; align-items: center; padding-left: 2px; box-sizing: border-box; }
.row1 i { width: 15px; height: 15px; } .row2 { display: flex; gap: 1px; margin-top: 1px; } .row2 i { width: 17px; height: 17px; }
.swfoot { height: 24px; border-top: 1px solid #3c3c3c; border-bottom: 3px solid #383838; display: flex; justify-content: flex-end; gap: 4px; padding-right: 23px; align-items: center; color: #dcdcdc; }
.lrow { display: flex; align-items: center; border-bottom: 1px solid #3f3f3f; flex: none; color: #dcdcdc; padding-left: 4px; }
.filter { height: 31px; } .filter > * { margin-top: 5px; }
.kind { width: 90px; justify-content: flex-start; padding-left: 6px; margin-right: 4px; gap: 2px; } .kind > .ic:first-child { margin-left: 1px; margin-right: -3px; } .pushr { margin-left: auto; margin-right: -2px; }
.filter > .ic:nth-child(4) { margin: 6px 3px 0; }
.tog { width: 9px; height: 18px; border-radius: 5px; background: #3c3c3c; margin-left: 7px; box-shadow: 0 0 0 1px #606060; } .tog i { width: 9px; height: 9px; border-radius: 50%; background: #e0e0e0; }
.blend { height: 26px; } .norm { width: 131px; padding-left: 7px; } .op { margin-left: 7px; } .blend .num { margin-left: 4px; }
.locks { height: 27px; padding-left: 6px; border-color: #484848; } .lks { display: flex; align-items: center; margin-left: 4px; } .lks .ic:nth-child(3) { margin: 0 1px; } .lks .ic:last-child { margin-left: -2px; } .fi { margin-left: 19px; } .locks .num { margin-left: 4px; }
.list { height: 576px; display: flex; background: #4d4d4d; }
.items { width: 269px; } .lsc { width: 15px; background: #4a4a4a; }
.layer { display: flex; height: 38px; border-bottom: 1px solid #434343; background: #535353; }
.eyec { width: 31px; border-right: 1px solid #434343; display: flex; padding: 8px 0 0 3.500px; box-sizing: border-box; } .layer .ic { color: #dcdcdc; }
.hi .body { background: #6a6a6a; flex: 1; display: flex; align-items: center; gap: 8px; padding-left: 1px; } .ln { margin-top: 2px; }
.layer.two { height: 77px; } .two .body { flex: 1; display: flex; flex-direction: column; }
.brk { width: 36px; height: 36px; box-sizing: border-box; position: relative; padding: 2px; background: linear-gradient(#fff, #fff) 0 0 / 11px 1px, linear-gradient(#fff, #fff) 100% 0 / 11px 1px, linear-gradient(#fff, #fff) 0 100% / 11px 1px, linear-gradient(#fff, #fff) 100% 100% / 11px 1px, linear-gradient(#fff, #fff) 0 0 / 1px 11px, linear-gradient(#fff, #fff) 100% 0 / 1px 11px, linear-gradient(#fff, #fff) 0 100% / 1px 11px, linear-gradient(#fff, #fff) 100% 100% / 1px 11px; background-repeat: no-repeat; }
.thb { width: 30px; height: 30px; border: 1px solid #222; background-color: #fff; }
.badge { position: absolute; right: 2px; bottom: 2px; width: 14px; height: 14px; background: #6a6a6a; border: solid #333; border-width: 1px 0 0 1px; } .badge .ic { margin: -3px 0 0 -3px; }
.r0 { display: flex; align-items: center; height: 40px; padding-left: 3px; } .r0 .thb { margin: -4px 10px 0 0; }
.fx { font: italic 14px/16px "Liberation Serif", serif; color: #e2e2e2; letter-spacing: -.3px; } .r0 .fx { margin-left: auto; margin-right: 5px; margin-top: -1px; }
.exp { width: 11px; height: 40px; background: #454545; display: flex; align-items: center; } .exp .ic { margin: -1px -5px 0; }
.r1, .r2 { display: flex; align-items: center; } .r1 { height: 17px; padding-left: 13px; gap: 1px; } .r2 { height: 20px; padding-left: 30px; gap: 1px; }
.lfoot { height: 25px; border-top: 1px solid #3c3c3c; display: flex; justify-content: flex-end; align-items: center; gap: 3px; padding-right: 22px; color: #dcdcdc; }
.lfoot .dim { color: #858585; }
.fxb { width: 24px; height: 24px; display: flex; align-items: center; justify-content: center; position: relative; } .fxb .tri { position: absolute; right: -1px; bottom: 1px; }

.libs { width: 93px; background: #535353; display: flex; flex-direction: column; flex: none; margin-right: 1px; }
.lib { height: 40px; border-bottom: 1px solid #3a3a3a; display: flex; flex-direction: column; } .lib .hgrip { margin-left: 37px; }
.lrow2 { display: flex; align-items: center; gap: 6px; padding-left: 7px; margin-top: 5px; color: #f0f0f0; }

.taskbar { height: 40px; margin-top: 1px; position: relative; display: flex; }
.wall { position: absolute; inset: 0; }
.tk { position: relative; width: 40px; height: 40px; margin-right: 9px; display: flex; align-items: center; justify-content: center; }
.tk.w1 { margin-left: 4px; margin-right: 8px; } .tk.w2 { margin-right: 11px; }
.run::after { content: ""; position: absolute; left: 0; right: 0; bottom: 0; height: 2px; background: #8fe4ef; }
.psb { width: 48px; background: #0f7d85; margin-left: -5px; }
.pslogo.big { width: 21px; height: 21px; margin: -1px 0 0; font-size: 11.500px; line-height: 19px; }
.wd { fill: #fff; font: 700 10px "Liberation Sans", sans-serif; }
.tray { position: absolute; right: 4px; top: 0; height: 40px; display: flex; align-items: center; }
.t2 { margin-left: 11px; } .t3 { margin-left: 9px; } .t4 { margin-left: 10px; } .t5 { margin-left: 9px; }
.clock { display: flex; flex-direction: column; align-items: center; margin-left: 9px; font-size: 11.500px; line-height: 18px; color: #fff; width: 52px; margin-top: -1px; }
.t6 { margin-left: 18px; } .desk { width: 1px; height: 40px; background: #7c999b; margin-left: 20px; }
</style>
